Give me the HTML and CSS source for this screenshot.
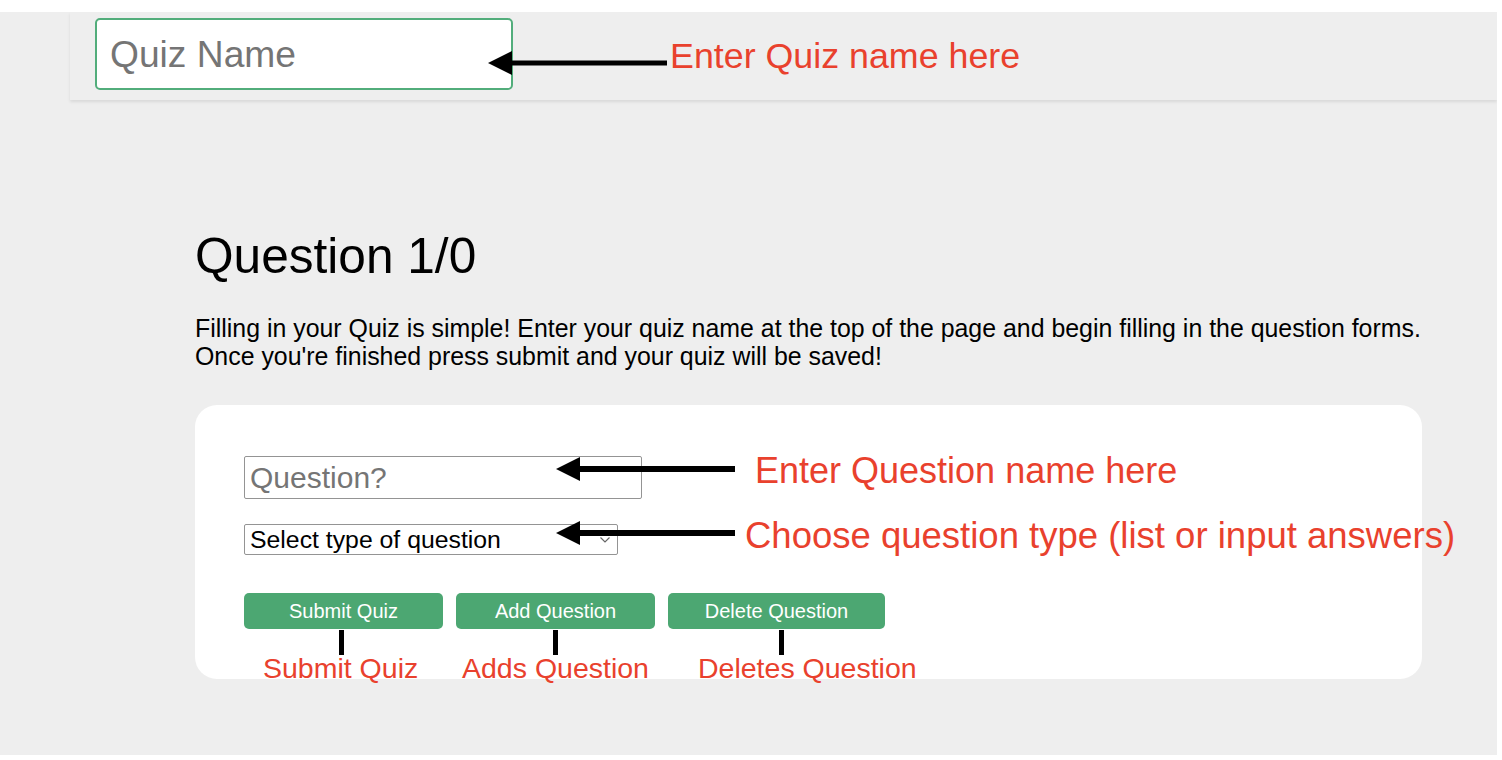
FILE: index.html
```html
<!DOCTYPE html>
<html lang="en">
<head>
<meta charset="utf-8">
<title>Quiz Maker</title>
<link rel="stylesheet" href="styles.css">
</head>
<body>
<div class="screen">
  <header class="topbar">
    <input class="quiz-name" type="text" placeholder="Quiz Name">
    <span class="note note-quiz">Enter Quiz name here</span>
    <svg class="arrow arrow-quiz" width="179" height="24" viewBox="0 0 179 24"><polygon points="0,12 24,0 24,24" fill="#000"/><rect x="20" y="9.5" width="159" height="5" fill="#000"/></svg>
  </header>
  <main class="content">
    <h1 class="title">Question 1/0</h1>
    <p class="intro">Filling in your Quiz is simple! Enter your quiz name at the top of the page and begin filling in the question forms.<br>Once you're finished press submit and your quiz will be saved!</p>
    <section class="card">
      <div class="row">
        <input class="question-input" type="text" placeholder="Question?">
        <span class="note note-question">Enter Question name here</span>
      </div>
      <div class="row row-select">
        <div class="select-wrap">
          <select class="type-select"><option>Select type of question</option><option>List answers</option><option>Input answers</option></select>
          <svg class="chevron" width="10" height="6" viewBox="0 0 10 6"><polyline points="0.5,0.5 5,5 9.5,0.5" fill="none" stroke="#666" stroke-width="1.2"/></svg>
        </div>
        <span class="note note-type">Choose question type (list or input answers)</span>
      </div>
      <div class="buttons">
        <button class="btn btn-submit" type="button">Submit Quiz</button>
        <button class="btn btn-add" type="button">Add Question</button>
        <button class="btn btn-delete" type="button">Delete Question</button>
      </div>
      <svg class="arrow arrow-question" width="179" height="24" viewBox="0 0 179 24"><polygon points="0,12 24,0 24,24" fill="#000"/><rect x="20" y="9" width="159" height="6" fill="#000"/></svg>
      <svg class="arrow arrow-select" width="179" height="24" viewBox="0 0 179 24"><polygon points="0,12 24,0 24,24" fill="#000"/><rect x="20" y="9" width="159" height="6" fill="#000"/></svg>
      <span class="connector connector-submit"></span>
      <span class="connector connector-add"></span>
      <span class="connector connector-delete"></span>
      <span class="label label-submit">Submit Quiz</span>
      <span class="label label-add">Adds Question</span>
      <span class="label label-delete">Deletes Question</span>
    </section>
  </main>
</div>
</body>
</html>
```

FILE: styles.css
```css
* {
  box-sizing: border-box;
}

html, body {
  margin: 0;
  padding: 0;
  background: #ffffff;
}

body {
  font-family: "Liberation Sans", Arial, sans-serif;
  color: #000;
  overflow: hidden;
}

.screen {
  margin-top: 12px;
  width: 1497px;
  height: 743px;
  background: #eeeeee;
  overflow: hidden;
}

.topbar {
  position: relative;
  margin-left: 70px;
  height: 88px;
  padding: 6px 0 0 25px;
  display: flex;
  align-items: flex-start;
  background: #eeeeee;
  box-shadow: 0 2px 3px rgba(0, 0, 0, 0.09);
}

.quiz-name {
  width: 418px;
  height: 72px;
  margin: 0;
  padding: 0 13px;
  border: 2px solid #52ad7b;
  border-radius: 5px;
  background: #fff;
  font-family: "Liberation Sans", Arial, sans-serif;
  font-size: 37.2px;
  color: #000;
  outline: none;
}

.quiz-name::placeholder {
  color: #757575;
}

.note {
  font-size: 36px;
  line-height: 1;
  color: #e9412d;
  white-space: nowrap;
}

.note-quiz {
  margin-left: 157px;
  margin-top: 21px;
  font-size: 35.8px;
}

.arrow {
  position: absolute;
  display: block;
}

.arrow-quiz {
  left: 418px;
  top: 39px;
}

.content {
  padding-left: 195px;
}

.title {
  margin: 128px 0 0 0;
  font-size: 49.6px;
  line-height: 1.15;
  font-weight: normal;
}

.intro {
  margin: 28.5px 0 0 0;
  font-size: 24.9px;
  line-height: 28px;
  white-space: nowrap;
}

.card {
  position: relative;
  margin-top: 35.5px;
  width: 1227px;
  padding: 51px 49px 50px 49px;
  background: #ffffff;
  border-radius: 22px;
}

.row {
  display: flex;
  align-items: flex-start;
}

.row-select {
  margin-top: 25px;
}

.question-input {
  width: 398px;
  height: 43px;
  margin: 0;
  padding: 0 5px;
  border: 1px solid #949494;
  border-radius: 2px;
  background: #fff;
  font-family: "Liberation Sans", Arial, sans-serif;
  font-size: 30px;
  outline: none;
}

.question-input::placeholder {
  color: #757575;
}

.note-question {
  margin-left: 113px;
  margin-top: -3px;
}

.select-wrap {
  position: relative;
  width: 374px;
  height: 31px;
}

.type-select {
  -webkit-appearance: none;
  appearance: none;
  width: 374px;
  height: 31px;
  margin: 0;
  padding: 0 4px 0 5px;
  border: 1px solid #949494;
  border-radius: 2px;
  background: #fff;
  font-family: "Liberation Sans", Arial, sans-serif;
  font-size: 24.8px;
  color: #000;
}

.chevron {
  position: absolute;
  right: 8px;
  top: 13px;
  pointer-events: none;
}

.note-type {
  margin-left: 127px;
  margin-top: -6px;
  font-size: 36.5px;
}

.buttons {
  margin-top: 38px;
  display: flex;
  gap: 13px;
}

.btn {
  height: 36px;
  width: 199px;
  margin: 0;
  padding: 0;
  border: none;
  border-radius: 5px;
  background: #4ca772;
  color: #ffffff;
  font-family: "Liberation Sans", Arial, sans-serif;
  font-size: 20px;
  cursor: pointer;
}

.btn-delete {
  width: 217px;
}

.arrow-question {
  left: 361px;
  top: 52px;
}

.arrow-select {
  left: 361px;
  top: 116px;
}

.connector {
  position: absolute;
  top: 225px;
  width: 5px;
  height: 25px;
  background: #000;
}

.connector-submit { left: 143.5px; }
.connector-add { left: 357.5px; }
.connector-delete { left: 583.5px; }

.label {
  position: absolute;
  top: 247px;
  font-size: 28.5px;
  line-height: 1.15;
  color: #e9412d;
  white-space: nowrap;
}

.label-submit { left: 68px; }
.label-add { left: 267px; }
.label-delete { left: 503px; }
```
